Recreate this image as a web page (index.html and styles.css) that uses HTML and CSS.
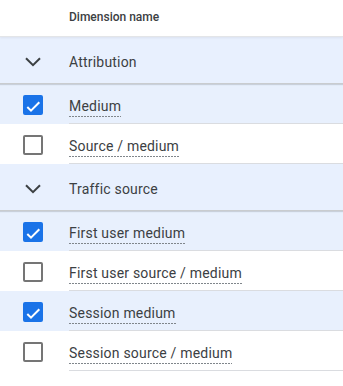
FILE: index.html
```html
<!DOCTYPE html>
<html lang="en">
  <head>
    <meta charset="UTF-8" />
    <meta name="viewport" content="width=device-width, initial-scale=1.0" />
    <link rel="stylesheet" href="styles.css">
    <title>Dimensions</title>
  </head>
  <body>
    <div class="table">
      <div class="header">
        <div class="lead"></div>
        <div class="head-name">Dimension name</div>
      </div>

      <div class="group">
        <div class="lead">
          <svg class="chevron" width="16" height="10" viewBox="0 0 16 10">
            <path d="M1 1.2 L8 8.2 L15 1.2" fill="none" stroke="#3c4043" stroke-width="2" />
          </svg>
        </div>
        <div class="group-name">Attribution</div>
      </div>
      <div class="row checked">
        <div class="lead">
          <span class="box on">
            <svg width="16" height="16" viewBox="0 0 16 16">
              <path d="M2.3 10 L6 13.7 L14.3 5.3" fill="none" stroke="#fff" stroke-width="2" />
            </svg>
          </span>
        </div>
        <div class="name"><span class="label">Medium</span></div>
      </div>
      <div class="row">
        <div class="lead"><span class="box"></span></div>
        <div class="name"><span class="label">Source / medium</span></div>
      </div>

      <div class="group">
        <div class="lead">
          <svg class="chevron" width="16" height="10" viewBox="0 0 16 10">
            <path d="M1 1.2 L8 8.2 L15 1.2" fill="none" stroke="#3c4043" stroke-width="2" />
          </svg>
        </div>
        <div class="group-name">Traffic source</div>
      </div>
      <div class="row checked">
        <div class="lead">
          <span class="box on">
            <svg width="16" height="16" viewBox="0 0 16 16">
              <path d="M2.3 10 L6 13.7 L14.3 5.3" fill="none" stroke="#fff" stroke-width="2" />
            </svg>
          </span>
        </div>
        <div class="name"><span class="label">First user medium</span></div>
      </div>
      <div class="row">
        <div class="lead"><span class="box"></span></div>
        <div class="name"><span class="label">First user source / medium</span></div>
      </div>
      <div class="row checked">
        <div class="lead">
          <span class="box on">
            <svg width="16" height="16" viewBox="0 0 16 16">
              <path d="M2.3 10 L6 13.7 L14.3 5.3" fill="none" stroke="#fff" stroke-width="2" />
            </svg>
          </span>
        </div>
        <div class="name"><span class="label">Session medium</span></div>
      </div>
      <div class="row">
        <div class="lead"><span class="box"></span></div>
        <div class="name"><span class="label">Session source / medium</span></div>
      </div>
    </div>
  </body>
</html>
```

FILE: styles.css
```css
body {
  margin: 0;
  font-family: Roboto, "Noto Sans", Arial, sans-serif;
  color: #3c4043;
  background: #fff;
}

.table {
  width: 343px;
}

.header {
  display: flex;
  align-items: center;
  height: 36px;
  border-bottom: 1px solid #e3e5e8;
  box-shadow: 0 1px 2px rgba(60, 64, 67, 0.08);
  position: relative;
  z-index: 2;
}

.head-name {
  font-size: 12px;
  font-weight: 500;
  color: #3c4043;
  padding-bottom: 3px;
}

.lead {
  width: 69px;
  flex-shrink: 0;
  display: flex;
  align-items: center;
}

.group {
  display: flex;
  align-items: center;
  height: 47px;
  padding-top: 4px;
  box-sizing: border-box;
  background: #e8f0fe;
  border-bottom: 1px solid #c9cccf;
  box-shadow: 0 1px 1px rgba(60, 64, 67, 0.18);
  position: relative;
  z-index: 1;
}

.chevron {
  margin-left: 25px;
}

.group-name {
  font-size: 14px;
  letter-spacing: 0.2px;
  color: #3c4043;
}

.row {
  display: flex;
  height: 40px;
  background: #fff;
}

.row.checked {
  background: #e8f0fd;
}

.row .lead {
  padding-left: 23px;
  padding-top: 1px;
  box-sizing: border-box;
}

.box {
  width: 20px;
  height: 20px;
  box-sizing: border-box;
  border: 2px solid #757575;
  border-radius: 2px;
  display: block;
}

.box.on {
  background: #1a73e8;
  border-color: #1a73e8;
}

.box svg {
  display: block;
}

.name {
  flex: 1;
  display: flex;
  align-items: flex-start;
  padding-top: 14px;
  border-bottom: 1px solid #dadce0;
}

.label {
  font-size: 14px;
  letter-spacing: 0.2px;
  color: #3c4043;
  padding-bottom: 3px;
  line-height: 16px;
  background-image: linear-gradient(to right, #80868b 2px, transparent 2px);
  background-size: 3px 1px;
  background-repeat: repeat-x;
  background-position: left bottom;
}
```
